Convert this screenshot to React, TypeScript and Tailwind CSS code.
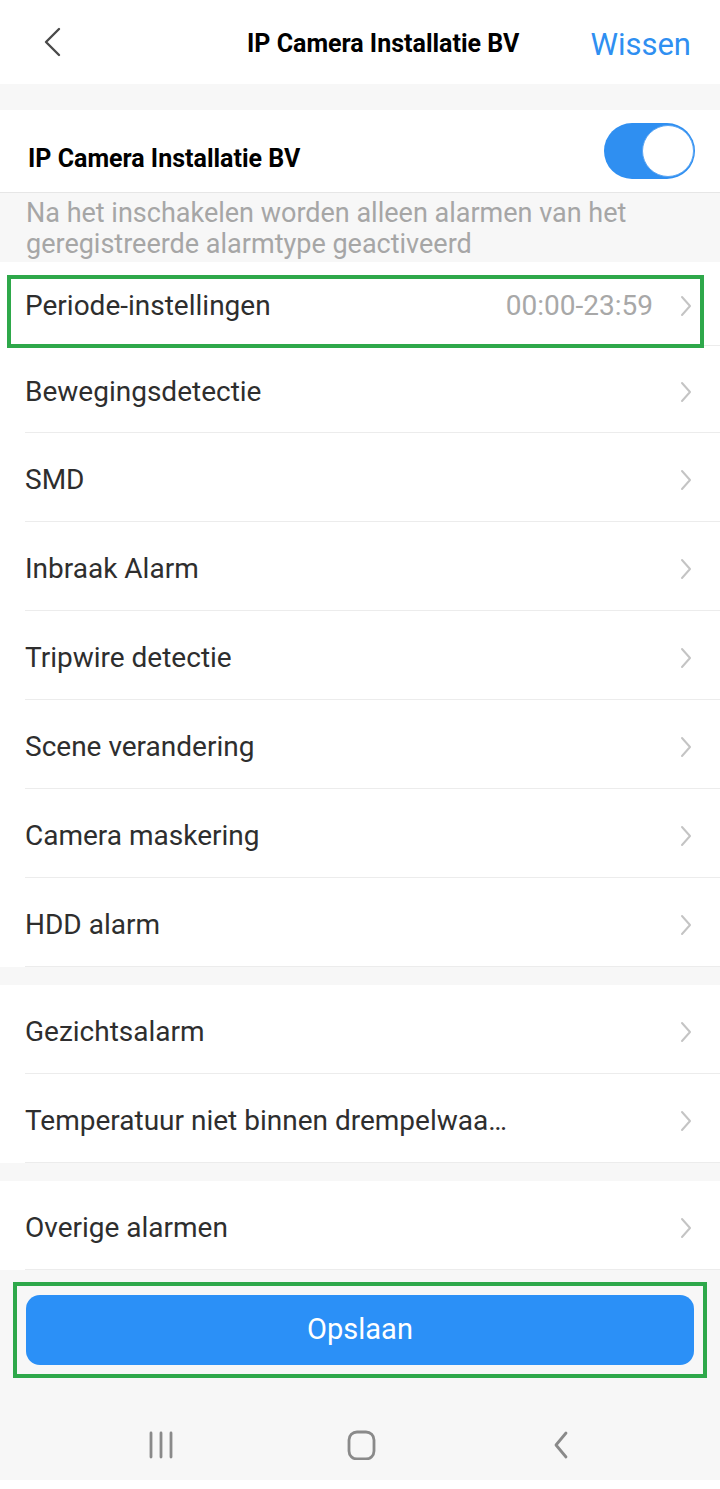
import React from 'react';

const Chevron = () => (
  <svg width="14" height="24" viewBox="0 0 14 24" fill="none" className="shrink-0">
    <path d="M3 3l8 9-8 9" stroke="#c4c4c4" strokeWidth="2" strokeLinecap="round" strokeLinejoin="round" />
  </svg>
);

interface RowProps {
  label: string;
  value?: string;
  height?: string;
}

const Row: React.FC<RowProps> = ({ label, value, height = 'h-[89px]' }) => (
  <div className={`flex items-center ${height} pl-[25px] bg-white`}>
    <div className="flex items-center flex-1 h-full border-b border-[#ececec] pr-[27px] pt-[5px]">
      <span className="flex-1 text-[28px] text-[#2e2e2e] whitespace-nowrap overflow-hidden">{label}</span>
      {value && <span className="text-[28px] text-[#a8a8a8] mr-[26px]">{value}</span>}
      <Chevron />
    </div>
  </div>
);

export default function App() {
  return (
    <div className="w-[720px] h-[1489px] bg-[#f7f7f7] flex flex-col" style={{ fontFamily: 'Roboto, "Noto Sans", sans-serif' }}>
      {/* Header */}
      <div className="h-[84px] bg-white flex items-center">
        <svg width="22" height="32" viewBox="0 0 22 32" fill="none" className="ml-[41px]">
          <path d="M18 3L5 16l13 13" stroke="#4a4a4a" strokeWidth="2.4" strokeLinecap="round" strokeLinejoin="round" />
        </svg>
        <span className="ml-[184px] pt-[3px] text-[25px] font-bold text-black">IP Camera Installatie BV</span>
        <span className="ml-auto mr-[29px] pt-[6px] text-[31px] text-[#2f8ff1]">Wissen</span>
      </div>

      <div className="h-[26px]" />

      {/* Toggle row */}
      <div className="h-[83px] bg-white flex items-center pl-[28px] pr-[25px] border-b border-[#e6e6e6]">
        <span className="flex-1 pt-[16px] text-[25px] font-bold text-black">IP Camera Installatie BV</span>
        <div className="w-[91px] h-[56px] rounded-full bg-[#2f8ff1] flex items-center justify-end pr-[1px]">
          <div className="w-[52px] h-[52px] rounded-full bg-white border border-[#5aa5f3]" />
        </div>
      </div>

      {/* Description */}
      <div className="h-[69px] px-[26px] pt-[5px] text-[27px] leading-[31px] text-[#a6a6a6]">
        Na het inschakelen worden alleen alarmen van het geregistreerde alarmtype geactiveerd
      </div>

      {/* Periode row with highlight */}
      <div className="relative">
        <Row label="Periode-instellingen" value="00:00-23:59" height="h-[84px]" />
        <div className="absolute top-[13px] left-[7px] w-[697px] h-[73px] border-[4px] border-[#2ea84a]" />
      </div>

      <Row label="Bewegingsdetectie" height="h-[87px]" />
      <Row label="SMD" />
      <Row label="Inbraak Alarm" />
      <Row label="Tripwire detectie" />
      <Row label="Scene verandering" />
      <Row label="Camera maskering" />
      <Row label="HDD alarm" />

      <div className="h-[18px]" />

      <Row label="Gezichtsalarm" />
      <Row label="Temperatuur niet binnen drempelwaa…" />

      <div className="h-[18px]" />

      <Row label="Overige alarmen" />

      {/* Save button */}
      <div className="relative mt-[12px] h-[96px] mx-[13px] border-[4px] border-[#2ea84a] px-[9px] pt-[9px]">
        <button className="w-full h-[70px] rounded-[14px] bg-[#2b90f7] text-white text-[29px]">Opslaan</button>
      </div>

      {/* Navigation bar */}
      <div className="flex-1 flex items-center pt-[40px] pb-[8px]">
        <svg width="30" height="30" viewBox="0 0 30 30" fill="none" className="ml-[146px]">
          <path d="M5 3v24M15 3v24M25 3v24" stroke="#8a8a8a" strokeWidth="2.8" strokeLinecap="round" />
        </svg>
        <svg width="30" height="30" viewBox="0 0 30 30" fill="none" className="ml-[170px]">
          <rect x="3" y="2" width="25" height="27" rx="8" stroke="#8a8a8a" strokeWidth="2.8" />
        </svg>
        <svg width="20" height="30" viewBox="0 0 20 30" fill="none" className="ml-[175px]">
          <path d="M15 3L5 15l10 12" stroke="#8a8a8a" strokeWidth="2.8" strokeLinecap="round" strokeLinejoin="round" />
        </svg>
      </div>
      <div className="h-[9px] bg-white" />
    </div>
  );
}
